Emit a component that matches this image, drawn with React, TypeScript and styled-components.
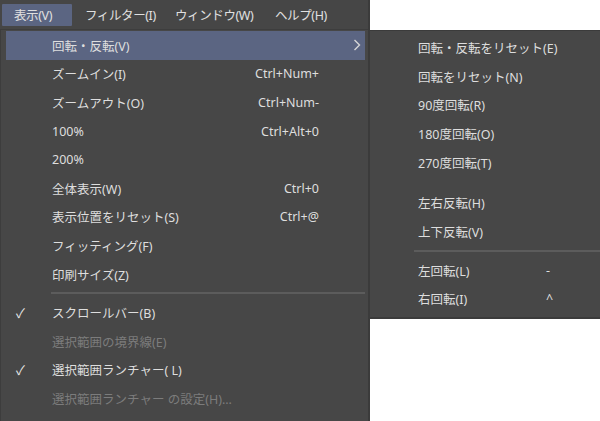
import { FC } from "react";
import styled, { createGlobalStyle } from "styled-components";

type Item =
  | { kind: "item"; label: string; shortcut?: string; checked?: boolean; disabled?: boolean; sub?: boolean; active?: boolean }
  | { kind: "sep" }
  | { kind: "gap" };

const mainItems: Item[] = [
  { kind: "item", label: "回転・反転(V)", sub: true, active: true },
  { kind: "item", label: "ズームイン(I)", shortcut: "Ctrl+Num+" },
  { kind: "item", label: "ズームアウト(O)", shortcut: "Ctrl+Num-" },
  { kind: "item", label: "100%", shortcut: "Ctrl+Alt+0" },
  { kind: "item", label: "200%" },
  { kind: "item", label: "全体表示(W)", shortcut: "Ctrl+0" },
  { kind: "item", label: "表示位置をリセット(S)", shortcut: "Ctrl+@" },
  { kind: "item", label: "フィッティング(F)" },
  { kind: "item", label: "印刷サイズ(Z)" },
  { kind: "sep" },
  { kind: "item", label: "スクロールバー(B)", checked: true },
  { kind: "item", label: "選択範囲の境界線(E)", disabled: true },
  { kind: "item", label: "選択範囲ランチャー( L)", checked: true },
  { kind: "item", label: "選択範囲ランチャー の設定(H)...", disabled: true },
];

const subItems: Item[] = [
  { kind: "item", label: "回転・反転をリセット(E)" },
  { kind: "item", label: "回転をリセット(N)" },
  { kind: "item", label: "90度回転(R)" },
  { kind: "item", label: "180度回転(O)" },
  { kind: "item", label: "270度回転(T)" },
  { kind: "gap" },
  { kind: "item", label: "左右反転(H)" },
  { kind: "item", label: "上下反転(V)" },
  { kind: "sep" },
  { kind: "item", label: "左回転(L)", shortcut: "-" },
  { kind: "item", label: "右回転(I)", shortcut: "^" },
];

const menus = [
  { label: "表示(V)", width: 70 },
  { label: "フィルター(I)", width: 90 },
  { label: "ウィンドウ(W)", width: 100 },
  { label: "ヘルプ(H)", width: 80 },
];

const Chevron = () => (
  <svg width="8" height="12" viewBox="0 0 8 12">
    <path d="M1.5 1 L6.5 6 L1.5 11" fill="none" stroke="#d6d6d6" strokeWidth="1.4" />
  </svg>
);

const App: FC = () => {
  return (
    <>
      <GlobalStyle />
      <Page>
        <LeftColumn>
          <MenuBar>
            {menus.map((m, i) => (
              <BarItem key={m.label} $open={i === 0} $w={m.width}>
                {m.label}
              </BarItem>
            ))}
          </MenuBar>
          <MainMenu>
            {mainItems.map((item, i) => {
              if (item.kind === "sep") return <MainSep key={i} />;
              if (item.kind === "gap") return <Gap key={i} />;
              return (
                <MainRow key={i} $active={item.active} $disabled={item.disabled}>
                  <Check>{item.checked ? "✓" : ""}</Check>
                  <Label>{item.label}</Label>
                  <Shortcut>{item.shortcut}</Shortcut>
                  <Arrow>{item.sub && <Chevron />}</Arrow>
                </MainRow>
              );
            })}
          </MainMenu>
        </LeftColumn>
        <RightColumn>
          <Blank $h={30} />
          <SubMenu>
            {subItems.map((item, i) => {
              if (item.kind === "sep") return <SubSep key={i} />;
              if (item.kind === "gap") return <Gap key={i} />;
              return (
                <SubRow key={i}>
                  <Label>{item.label}</Label>
                  <SubShortcut>{item.shortcut}</SubShortcut>
                </SubRow>
              );
            })}
          </SubMenu>
          <Blank />
        </RightColumn>
      </Page>
    </>
  );
};

export default App;

const GlobalStyle = createGlobalStyle`
  html, body {
    margin: 0;
    padding: 0;
    background: #ffffff;
  }
  body {
    font-family: "Noto Sans", "Noto Sans CJK JP", sans-serif;
    font-size: 12.5px;
  }
`;

const Page = styled.div`
  width: 600px;
  height: 421px;
  display: flex;
  overflow: hidden;
`;

const LeftColumn = styled.div`
  width: 368px;
  flex-shrink: 0;
  display: flex;
  flex-direction: column;
  background: #474747;
  border-right: 2px solid #3b3b3b;
`;

const MenuBar = styled.div`
  height: 29px;
  display: flex;
  align-items: center;
  padding-left: 2px;
  box-sizing: border-box;
  background: #464646;
`;

const BarItem = styled.div<{ $open?: boolean; $w: number }>`
  width: ${(p) => p.$w}px;
  height: 22px;
  display: flex;
  align-items: center;
  padding-left: 12px;
  box-sizing: border-box;
  white-space: nowrap;
  color: #e0e0e0;
  font-size: 12.5px;
  letter-spacing: -0.4px;
  background: ${(p) => (p.$open ? "#5b6582" : "transparent")};
  border-radius: 1px;

  & + & {
    padding-left: 13px;
  }
`;

const MainMenu = styled.div`
  flex: 1;
  display: flex;
  flex-direction: column;
  padding: 1px 3px 0 5px;
  border-left: 1px solid #3d3d3d;
  border-top: 1px solid #3d3d3d;
`;

const MainRow = styled.div<{ $active?: boolean; $disabled?: boolean }>`
  height: 28.6px;
  display: flex;
  align-items: center;
  flex-shrink: 0;
  background: ${(p) => (p.$active ? "#5b6582" : "transparent")};
  color: ${(p) => (p.$disabled ? "#7c7c7c" : "#dedede")};
`;

const Check = styled.span`
  width: 46px;
  flex-shrink: 0;
  padding-left: 10px;
  box-sizing: border-box;
  font-size: 13px;
  color: #e6e6e6;
`;

const Label = styled.span`
  flex: 1;
  min-width: 0;
  white-space: nowrap;
`;

const Shortcut = styled.span`
  width: 120px;
  flex-shrink: 0;
  text-align: right;
  white-space: nowrap;
`;

const Arrow = styled.span`
  width: 46px;
  flex-shrink: 0;
  display: flex;
  justify-content: flex-end;
  padding-right: 4px;
  box-sizing: border-box;
`;

const MainSep = styled.div`
  height: 2px;
  flex-shrink: 0;
  margin: 4px 0 4px 45px;
  background: #5c5c5c;
`;

const Gap = styled.div`
  height: 12px;
  flex-shrink: 0;
`;

const RightColumn = styled.div`
  flex: 1;
  min-width: 0;
  display: flex;
  flex-direction: column;
`;

const Blank = styled.div<{ $h?: number }>`
  ${(p) => (p.$h ? `height: ${p.$h}px;` : "flex: 1;")}
  background: #ffffff;
`;

const SubMenu = styled.div`
  display: flex;
  flex-direction: column;
  padding: 2px 0 4px 48px;
  background: #474747;
  border-top: 1px solid #3b3b3b;
  border-bottom: 2px solid #3b3b3b;
  margin-left: -2px;
  border-left: 2px solid #3b3b3b;
  color: #dedede;
`;

const SubRow = styled.div`
  height: 28.7px;
  display: flex;
  align-items: center;
`;

const SubShortcut = styled.span`
  width: 54px;
  flex-shrink: 0;
  white-space: nowrap;
`;

const SubSep = styled.div`
  height: 2px;
  margin: 4px 0 4px -4px;
  background: #5c5c5c;
`;
